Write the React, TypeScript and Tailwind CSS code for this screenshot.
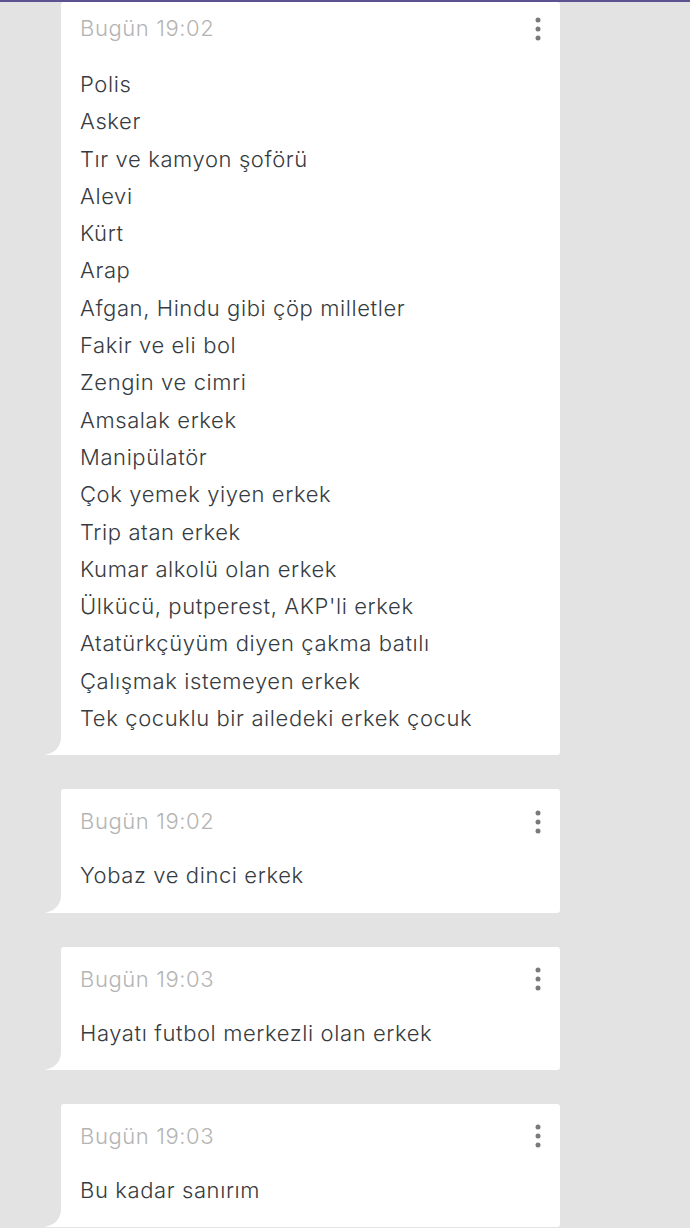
import React from 'react';

type Message = {
  id: string;
  time: string;
  lines: string[];
};

const messages: Message[] = [
  {
    id: '1',
    time: 'Bugün 19:02',
    lines: [
      'Polis',
      'Asker',
      'Tır ve kamyon şoförü',
      'Alevi',
      'Kürt',
      'Arap',
      'Afgan, Hindu gibi çöp milletler',
      'Fakir ve eli bol',
      'Zengin ve cimri',
      'Amsalak erkek',
      'Manipülatör',
      'Çok yemek yiyen erkek',
      'Trip atan erkek',
      'Kumar alkolü olan erkek',
      "Ülkücü, putperest, AKP'li erkek",
      'Atatürkçüyüm diyen çakma batılı',
      'Çalışmak istemeyen erkek',
      'Tek çocuklu bir ailedeki erkek çocuk',
    ],
  },
  { id: '2', time: 'Bugün 19:02', lines: ['Yobaz ve dinci erkek'] },
  { id: '3', time: 'Bugün 19:03', lines: ['Hayatı futbol merkezli olan erkek'] },
  { id: '4', time: 'Bugün 19:03', lines: ['Bu kadar sanırım'] },
];

function MoreIcon() {
  return (
    <svg width="8" height="26" viewBox="0 0 8 26" className="text-[#7a7a7a]">
      <circle cx="4" cy="4" r="2.5" fill="currentColor" />
      <circle cx="4" cy="13" r="2.5" fill="currentColor" />
      <circle cx="4" cy="22" r="2.5" fill="currentColor" />
    </svg>
  );
}

function Bubble({ message, first }: { message: Message; first?: boolean }) {
  return (
    <div className="relative ml-[61px] w-[499px]">
      <div
        className={`bg-white rounded-r-[3px] rounded-tl-[3px] pl-[19px] pr-[18px] pb-[18px] ${
          first ? 'pt-[8px]' : 'pt-[14px]'
        }`}
      >
        <div className="flex items-center justify-between leading-[37px]">
          <span className="text-[22px] font-light tracking-[0.6px] text-[#b4b4b4]">
            {message.time}
          </span>
          <MoreIcon />
        </div>
        <div
          className={`text-[22px] font-light tracking-[0.6px] leading-[37.3px] text-[#363b41] ${
            first ? 'mt-[19px]' : 'mt-[17px]'
          }`}
        >
          {message.lines.map((line) => (
            <div key={line}>{line}</div>
          ))}
        </div>
      </div>
      <svg
        width="17"
        height="18"
        viewBox="0 0 17 18"
        className="absolute bottom-0 left-[-16px]"
      >
        <path d="M17 0 L16 0 Q16 14 0 18 L17 18 Z" fill="#ffffff" />
      </svg>
    </div>
  );
}

export default function App() {
  return (
    <div
      className="min-h-[1228px] bg-[#e3e3e3] overflow-hidden"
      style={{ fontFamily: 'Inter, "Noto Sans", sans-serif' }}
    >
      <div className="h-[2px] bg-[#5e5190]" />
      <div className="flex flex-col gap-[34px]">
        {messages.map((m, i) => (
          <Bubble key={m.id} message={m} first={i === 0} />
        ))}
      </div>
    </div>
  );
}
